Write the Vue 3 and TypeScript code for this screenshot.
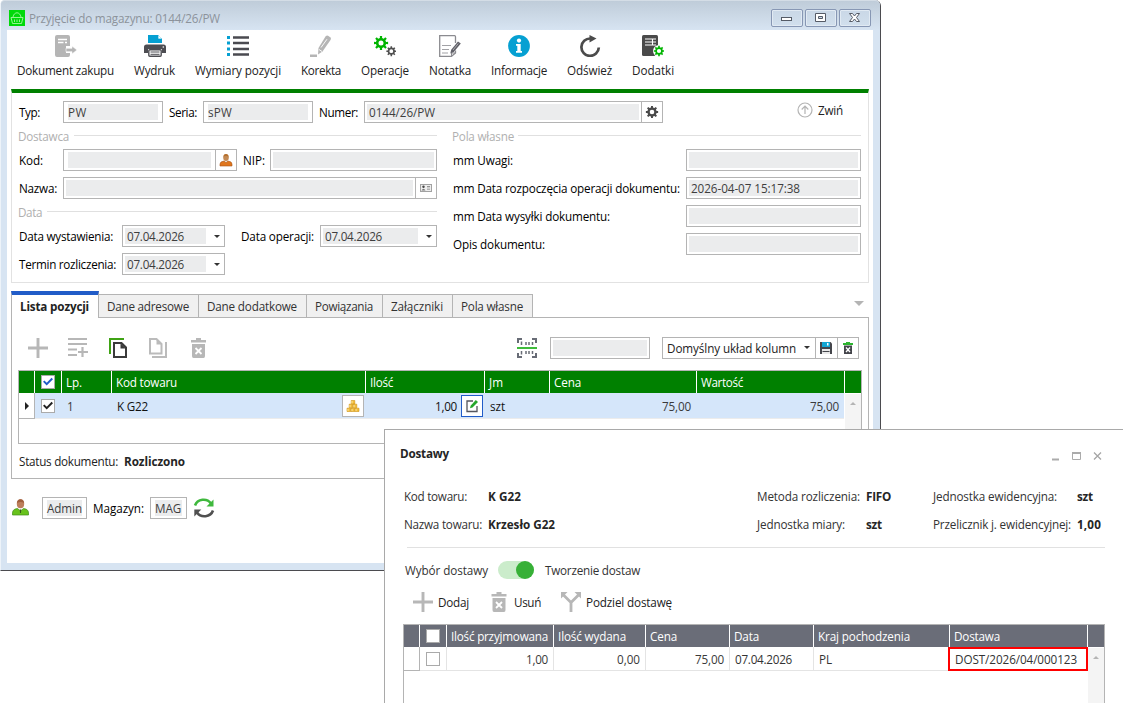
<script setup lang="ts">
import type { Directive } from 'vue'

// Tunes letter spacing so a label occupies the given width in pixels.
const vFit: Directive<HTMLElement, number> = {
  mounted(el, binding) {
    const count = (el.textContent ?? '').trim().length
    if (!count) return
    const natural = el.getBoundingClientRect().width
    el.style.letterSpacing = `${((binding.value - natural) / count).toFixed(3)}px`
  },
}

function gear(cx: number, cy: number, outer: number, inner: number, hole: number, teeth = 8): string {
  const step = (Math.PI * 2) / teeth
  const points: string[] = []
  for (let i = 0; i < teeth; i++) {
    const a = i * step
    const corners: [number, number][] = [
      [inner, a - step * 0.27],
      [outer, a - step * 0.2],
      [outer, a + step * 0.2],
      [inner, a + step * 0.27],
    ]
    for (const [r, t] of corners) {
      points.push(`${(cx + r * Math.sin(t)).toFixed(2)} ${(cy - r * Math.cos(t)).toFixed(2)}`)
    }
  }
  return `M${points.join('L')}ZM${cx - hole} ${cy}a${hole} ${hole} 0 1 0 ${hole * 2} 0a${hole} ${hole} 0 1 0 ${-hole * 2} 0Z`
}

const actions = [
  { id: 'doc', label: 'Dokument zakupu', width: 97 },
  { id: 'print', label: 'Wydruk', width: 41 },
  { id: 'dims', label: 'Wymiary pozycji', width: 86 },
  { id: 'fix', label: 'Korekta', width: 40 },
  { id: 'ops', label: 'Operacje', width: 48 },
  { id: 'note', label: 'Notatka', width: 42 },
  { id: 'info', label: 'Informacje', width: 56 },
  { id: 'reload', label: 'Odśwież', width: 45 },
  { id: 'extra', label: 'Dodatki', width: 42 },
]

const customFields = [
  { label: 'mm Uwagi:', width: 60, value: '' },
  { label: 'mm Data rozpoczęcia operacji dokumentu:', width: 227, value: '2026-04-07 15:17:38' },
  { label: 'mm Data wysyłki dokumentu:', width: 157, value: '' },
  { label: 'Opis dokumentu:', width: 92, value: '' },
]

const tabs = [
  { label: 'Dane adresowe', width: 82 },
  { label: 'Dane dodatkowe', width: 90 },
  { label: 'Powiązania', width: 58 },
  { label: 'Załączniki', width: 52 },
  { label: 'Pola własne', width: 62 },
]

const itemHeads = [
  { label: 'Lp.', width: 16 },
  { label: 'Kod towaru', width: 61 },
  { label: 'Ilość', width: 23 },
  { label: 'Jm', width: 14 },
  { label: 'Cena', width: 27 },
  { label: 'Wartość', width: 42 },
]

const deliveryHeads = [
  { label: 'Ilość przyjmowana', width: 97 },
  { label: 'Ilość wydana', width: 68 },
  { label: 'Cena', width: 27 },
  { label: 'Data', width: 25 },
  { label: 'Kraj pochodzenia', width: 92 },
  { label: 'Dostawa', width: 46 },
]
</script>

<template>
  <div class="screen">
    <section class="window">
      <header class="titlebar">
        <svg class="app-icon" viewBox="0 0 16 16">
          <rect width="16" height="16" fill="#00d90a" />
          <g fill="none" stroke="#a5f7a0" stroke-width="0.9">
            <path d="M2 7.5H14L12.5 13.5H3.5ZM4 7C4.5 4.2 6.3 2.8 8 2.8S11.5 4.2 12 7" />
            <path d="M5.5 9.5V12M8 9.5V12M10.5 9.5V12" />
          </g>
        </svg>
        <span v-fit="191" class="caption">Przyjęcie do magazynu: 0144/26/PW</span>
        <div class="win-buttons">
          <button class="win-button">
            <svg viewBox="0 0 32 18"><rect x="10.5" y="8.500" width="10" height="3" fill="#fff" stroke="#555b66" /></svg>
          </button>
          <button class="win-button">
            <svg viewBox="0 0 32 18"><path d="M10.500 4.500H20.500V12.500H10.500ZM13.500 7.500H17.500V9.500H13.500Z" fill="#fff" fill-rule="evenodd" stroke="#555b66" /></svg>
          </button>
          <button class="win-button">
            <svg viewBox="0 0 32 18"><path d="M10.500 4.500H13.500L15.500 7L17.500 4.500H20.500L17.500 8.500L20.500 12.500H17.500L15.500 10L13.500 12.500H10.500L13.500 8.500Z" fill="#fff" stroke="#555b66" /></svg>
          </button>
        </div>
      </header>

      <div class="client">
        <nav class="actions">
          <div v-for="a in actions" :key="a.id" class="action">
            <svg v-if="a.id === 'doc'" viewBox="0 0 22 22">
              <path d="M2 0H13Q15 0 15 2V11H11V18H15V20Q15 22 13 22H2Q0 22 0 20V2Q0 0 2 0Z" fill="#b5b5b5" />
              <path d="M3 4.500H12M3 7.500H8.500M10 7.500H12" stroke="#fff" stroke-width="1.300" />
              <path d="M11 13.300H17V11L22 15L17 19V16.700H11Z" fill="#b5b5b5" stroke="#fff" stroke-width=".6" />
            </svg>
            <svg v-else-if="a.id === 'print'" viewBox="0 0 22 22">
              <path d="M4 0H14L18 4V8H4Z" fill="#05a0d2" /><path d="M14 0V4H18" fill="#fff" stroke="#05a0d2" stroke-width=".7" />
              <path d="M2.500 9.500H19.500Q22 9.500 22 12V18H18V14H4V18H0V12Q0 9.500 2.500 9.500Z" fill="#4d4d52" />
              <rect x="4.800" y="14.800" width="12.400" height="6.500" rx="1" fill="#fff" stroke="#4d4d52" stroke-width="1.400" />
              <path d="M6.500 17H15.500M6.500 19.300H15.500" stroke="#4d4d52" />
              <circle cx="19.300" cy="12" r=".8" fill="#fff" />
            </svg>
            <svg v-else-if="a.id === 'dims'" viewBox="0 0 22 22">
              <path d="M0 2.500H3M0 8H3M0 14H3M0 19.500H3" stroke="#05a0d2" stroke-width="3" />
              <path d="M6 2.500H22M6 8H22M6 14H22M6 19.500H22" stroke="#4a4a50" stroke-width="2.600" />
            </svg>
            <svg v-else-if="a.id === 'fix'" viewBox="0 0 22 22">
              <path d="M0 19.500H7V22H0Z" fill="#b5b5b5" />
              <path d="M15.500 1.500Q17 0 18.500 1L20.500 2.500Q21.500 3.500 20.500 5L12.500 16.500L8 19.500L8.500 13Z" fill="#b5b5b5" />
              <path d="M11 12.500L17 4.200M9 14.500L12 16.500" stroke="#fff" stroke-width=".9" />
            </svg>
            <svg v-else-if="a.id === 'ops'" viewBox="0 0 22 22">
              <path :d="gear(7, 8, 7.2, 5.2, 2.5)" fill="#00b400" fill-rule="evenodd" />
              <path :d="gear(17.3, 16.200, 5, 3.700, 1.9)" fill="#505050" fill-rule="evenodd" />
            </svg>
            <svg v-else-if="a.id === 'note'" viewBox="0 0 22 22">
              <path d="M16.500 8V2Q16.500 .5 15 .5H.7V21.300H12.500L16.500 18V15.500" fill="none" stroke="#8b8b90" stroke-width="1.300" />
              <path d="M12.500 21.300V18H16.500" fill="none" stroke="#8b8b90" />
              <path d="M3 10.500H12M3 14.500H10M3 18H9" stroke="#a2a2a6" />
              <path d="M19 6.500L21.800 8.500L14.800 17L11.300 18.500L12.200 14.800Z" fill="#606068" />
              <path d="M14 15L19.300 8.500" stroke="#ddd" stroke-width=".6" />
            </svg>
            <svg v-else-if="a.id === 'info'" viewBox="0 0 22 22">
              <circle cx="11" cy="11" r="10.900" fill="#05a0d2" />
              <circle cx="11" cy="5.600" r="2.100" fill="#fff" />
              <path d="M8 9H12.700V16H14V17.800H8V16H9.300V10.700H8Z" fill="#fff" />
            </svg>
            <svg v-else-if="a.id === 'reload'" viewBox="0 0 22 22">
              <path d="M11.500 3.500A8.700 8.700 0 1 0 19.800 12.500" fill="none" stroke="#4b4b4b" stroke-width="2.700" />
              <path d="M10.500 0L17.500 3.500L10.500 7.500Z" fill="#4b4b4b" />
            </svg>
            <svg v-else viewBox="0 0 22 22">
              <path d="M1.500 0H14.500Q16 0 16 1.500V21H1.500Q0 21 0 19.500V1.500Q0 0 1.500 0Z" fill="#4a4a4a" />
              <path d="M3 4H14M3 7H14M3 10H14M10.500 4V10" stroke="#fff" stroke-width="1.100" />
              <circle cx="17" cy="16" r="6" fill="#fff" />
              <path :d="gear(17, 16, 5.2, 3.9, 2.1)" fill="#00b400" fill-rule="evenodd" />
            </svg>
            <span v-fit="a.width">{{ a.label }}</span>
          </div>
        </nav>

        <section class="form">
          <div class="row head-row">
            <label class="l-typ"><span v-fit="21">Typ:</span></label>
            <div class="field f-typ inset"><i><span v-fit="19">PW</span></i></div>
            <label class="l-seria"><span v-fit="28">Seria:</span></label>
            <div class="field f-seria inset"><i><span v-fit="24">sPW</span></i></div>
            <label class="l-numer"><span v-fit="39">Numer:</span></label>
            <div class="field f-numer"><i><span v-fit="66">0144/26/PW</span></i></div>
            <button class="side"><svg class="s14" viewBox="0 0 14 14"><path :d="gear(7, 7, 6.2, 4.7, 2.3)" fill="#4a4a4a" fill-rule="evenodd" /></svg></button>
            <div class="collapse">
              <svg viewBox="0 0 16 16"><circle cx="8" cy="8" r="7" /><path d="M8 12V4.500M4.700 7.500L8 4.200L11.300 7.500" /></svg>
              <span v-fit="25">Zwiń</span>
            </div>
          </div>
          <div class="columns">
            <div class="left">
              <div class="legend"><span v-fit="51">Dostawca</span></div>
              <div class="row">
                <label class="l-typ"><span v-fit="24">Kod:</span></label>
                <div class="field f-kod inset"><i /></div>
                <button class="side">
                  <svg class="s14" viewBox="0 0 14 14">
                    <path d="M1 13V11Q1 8.500 5 8L7 9.500L9 8Q13 8.500 13 11V13Z" fill="#e0761d" stroke="#a8561a" stroke-width=".6" />
                    <ellipse cx="7" cy="4.500" rx="2.800" ry="3.500" fill="#c38a55" /><path d="M4.300 3.500Q4.800 1 7 1T9.700 3.500Q7 2.300 4.300 3.500Z" fill="#b56f2c" />
                  </svg>
                </button>
                <label class="l-nip"><span v-fit="22">NIP:</span></label>
                <div class="field f-nip"><i /></div>
              </div>
              <div class="row">
                <label class="l-typ"><span v-fit="38">Nazwa:</span></label>
                <div class="field f-nazwa"><i /></div>
                <button class="side">
                  <svg class="s14" viewBox="0 0 14 14"><rect x="1.500" y="3.500" width="11" height="7" fill="#eee" stroke="#a2a2a2" /><circle cx="4.500" cy="5.800" r="1.200" fill="#444" /><path d="M2.500 9.500Q4.500 6 6.500 9.500ZM8 5.200H11V6.200H8ZM8 7.700H11V8.500H8Z" fill="#777" /></svg>
                </button>
              </div>
              <div class="legend"><span v-fit="24">Data</span></div>
              <div class="row">
                <label class="l-date"><span v-fit="94">Data wystawienia:</span></label>
                <div class="field date f-wyst"><i><span v-fit="57">07.04.2026</span></i><b class="caret" /></div>
                <label class="l-oper"><span v-fit="73">Data operacji:</span></label>
                <div class="field date f-oper"><i><span v-fit="57">07.04.2026</span></i><b class="caret" /></div>
              </div>
              <div class="row">
                <label class="l-date"><span v-fit="97">Termin rozliczenia:</span></label>
                <div class="field date f-wyst"><i><span v-fit="57">07.04.2026</span></i><b class="caret" /></div>
              </div>
            </div>
            <div class="right">
              <div class="legend"><span v-fit="62">Pola własne</span></div>
              <div v-for="f in customFields" :key="f.label" class="row">
                <label class="l-custom"><span v-fit="f.width">{{ f.label }}</span></label>
                <div class="field f-custom"><i><span v-if="f.value" v-fit="109">{{ f.value }}</span></i></div>
              </div>
            </div>
          </div>
        </section>

        <div class="tabs">
          <div class="tab active"><span v-fit="69">Lista pozycji</span></div>
          <div v-for="t in tabs" :key="t.label" class="tab"><span v-fit="t.width">{{ t.label }}</span></div>
          <b class="tab-more" />
        </div>

        <section class="panel">
          <div class="tools">
            <svg class="tool" viewBox="0 0 22 22"><path d="M11 1V21M1 11H21" stroke="#b7b7b7" stroke-width="2.900" /></svg>
            <svg class="tool" viewBox="0 0 22 22"><path d="M1 2H20M1 7H20M1 12.500H10M1 18H10M15.500 10V20M11 15H21" stroke="#b7b7b7" stroke-width="2.200" /></svg>
            <svg class="tool" viewBox="0 0 22 22"><path d="M3 17V2H17" fill="none" stroke="#3fa314" stroke-width="2" /><path d="M7 6H14.500L19 10.500V20H7Z" fill="#fff" stroke="#3b3b3b" stroke-width="2" /><path d="M13.500 6V11.500H19Z" fill="#3b3b3b" /></svg>
            <svg class="tool" viewBox="0 0 22 22"><path d="M3 2H9.500L14.500 7V16.500H3Z" fill="none" stroke="#bbb" stroke-width="2" /><path d="M9.500 2V7.500H14.500Z" fill="#bbb" /><path d="M19 5V20H5" fill="none" stroke="#bbb" stroke-width="2" /></svg>
            <svg class="tool" viewBox="0 0 22 22"><path d="M4 3H9V1H14V3H19V5.500H4ZM5 7H18V19Q18 21 16.500 21H6.500Q5 21 5 19Z" fill="#b7b7b7" /><path d="M8.500 11L14.500 17M14.500 11L8.500 17" stroke="#fff" stroke-width="1.800" /></svg>
            <svg class="scan" viewBox="0 0 22 22">
              <path d="M2 6V2H6M16 2H20V6M2 16V20H6M16 20H20V16" fill="none" stroke="#686c76" stroke-width="2" />
              <path d="M5.500 4.500V8M10 5V8M13 5V8M16.500 5V8M5.500 14V17.500M10 14V17M13 14V17M16.500 14V17" stroke="#686c76" stroke-width="1.500" />
              <path d="M1 11H21" stroke="#3fbb3c" stroke-width="2" />
            </svg>
            <div class="field f-scan"><i /></div>
            <div class="combo"><span v-fit="129">Domyślny układ kolumn</span><b class="caret" /></div>
            <button class="side save">
              <svg class="s14" viewBox="0 0 14 14"><path d="M1 1H11.500L13 2.500V13H1Z" fill="#45464c" /><path d="M3 1H11V6H3Z" fill="#12a6d4" /><path d="M8 2H9.500V4.500H8Z" fill="#fff" /><path d="M3 8H11V13H3Z" fill="#e8e8e8" /><path d="M3.500 10.500H10.500" stroke="#45464c" /></svg>
            </button>
            <button class="side">
              <svg class="s14" viewBox="0 0 14 14"><path d="M2 2H5V1H9V2H12V4H2Z" fill="#2db430" /><path d="M3 4.500H11V13H3Z" fill="#44454b" /><path d="M5 6.500L9 11M9 6.500L5 11" stroke="#fff" stroke-width="1.300" /></svg>
            </button>
          </div>

          <div class="items">
            <div class="grid-row ihead">
              <div class="cell" />
              <div class="cell check"><svg class="box" viewBox="0 0 14 14"><path d="M2 6L5.500 9.500L12 3" stroke="#215cc8" /></svg></div>
              <div v-for="h in itemHeads" :key="h.label" class="cell"><span v-fit="h.width">{{ h.label }}</span></div>
              <div class="cell" />
            </div>
            <div class="grid-row irow">
              <div class="marker"><b /></div>
              <div class="cell check"><svg class="box" viewBox="0 0 14 14"><path d="M2 6L5.500 9.500L12 3" stroke="#222" /></svg></div>
              <div class="cell dim">1</div>
              <div class="cell split">
                <span v-fit="31">K G22</span>
                <button class="side gold">
                  <svg class="s14" viewBox="0 0 14 14"><g fill="#f3bd38" stroke="#cf9418" stroke-width=".6"><path d="M5.200 1.500H8.800V5H5.200ZM3.200 5.200H6.800V8.800H3.200ZM7.200 5.200H10.800V8.800H7.200ZM1 9.200H4.800V12.500H1ZM5.100 9.200H8.900V12.500H5.100ZM9.200 9.200H13V12.500H9.200Z" /></g><path d="M6 2V4.500M4 6V8.300M8 6V8.300M2 10V12M6 10V12M10 10V12" stroke="#fff3bd" stroke-width=".8" /></svg>
                </button>
              </div>
              <div class="cell qty">
                <span v-fit="22">1,00</span>
                <button class="side edit">
                  <svg class="s14" viewBox="0 0 14 14"><path d="M8 2H2V12.500H12V7" fill="none" stroke="#55565d" stroke-width="1.300" /><path d="M10.800 1L13 3L7.500 8.500L5 9.300L5.600 6.800Z" fill="#25a72c" /></svg>
                </button>
              </div>
              <div class="cell"><span v-fit="15">szt</span></div>
              <div class="cell num"><span v-fit="29">75,00</span></div>
              <div class="cell num"><span v-fit="29">75,00</span></div>
            </div>
            <div class="scrollbar"><b /></div>
          </div>
          <div class="status"><span v-fit="99">Status dokumentu:</span><strong v-fit="61">Rozliczono</strong></div>
        </section>

        <footer class="footer">
          <svg class="user" viewBox="0 0 16 17">
            <path d="M0 16V14Q0 10 5 9.500L8 12L11 9.500Q16 10 16 14V16Z" fill="#68c21c" stroke="#3f8d18" stroke-width=".7" />
            <ellipse cx="8" cy="4.800" rx="3.700" ry="4.500" fill="#bd7f5c" /><path d="M4.400 4Q5 .3 8 .3T11.600 4Q8 1.800 4.400 4Z" fill="#a05f3d" /><path d="M7.300 10.500H8.700L8.500 14H7.500Z" fill="#37591a" />
          </svg>
          <div class="field f-admin inset"><i><span v-fit="35">Admin</span></i></div>
          <label class="l-mag"><span v-fit="51">Magazyn:</span></label>
          <div class="field f-mag inset"><i><span v-fit="26">MAG</span></i></div>
          <svg class="sync" viewBox="0 0 22 22">
            <path d="M2 8.500A9 8.500 0 0 1 18 6.500" fill="none" stroke="#3fb83d" stroke-width="2.600" /><path d="M20.500 2.500V9.500H13.500Z" fill="#3fb83d" />
            <path d="M20 13.500A9 8.500 0 0 1 4 15.500" fill="none" stroke="#505050" stroke-width="2.600" /><path d="M1.300 19.500V12.500H8.300Z" fill="#505050" />
          </svg>
        </footer>
      </div>
    </section>

    <section class="dialog">
      <header class="dialog-head">
        <strong v-fit="49">Dostawy</strong>
        <svg class="dialog-controls" viewBox="0 0 50 12"><path d="M0 9.500H7" stroke="#ababab" stroke-width="2" /><path d="M20.500 2.500H28.500V9.500H20.500Z" fill="none" stroke="#ababab" /><path d="M20 3H29" stroke="#ababab" stroke-width="2" /><path d="M42 2.500L49 9.500M49 2.500L42 9.500" stroke="#a5a5a5" stroke-width="1.300" /></svg>
      </header>
      <div class="facts">
        <span v-fit="63">Kod towaru:</span><strong><span v-fit="33">K G22</span></strong>
        <span v-fit="103">Metoda rozliczenia:</span><strong><span v-fit="25">FIFO</span></strong>
        <span v-fit="124">Jednostka ewidencyjna:</span><strong><span v-fit="16">szt</span></strong>
        <span v-fit="78">Nazwa towaru:</span><strong><span v-fit="67">Krzesło G22</span></strong>
        <span v-fit="88">Jednostka miary:</span><strong><span v-fit="16">szt</span></strong>
        <span v-fit="138">Przelicznik j. ewidencyjnej:</span><strong><span v-fit="24">1,00</span></strong>
      </div>
      <div class="mode">
        <span v-fit="83">Wybór dostawy</span>
        <div class="switch"><b /></div>
        <span v-fit="95">Tworzenie dostaw</span>
      </div>
      <div class="dialog-tools">
        <svg class="tool" viewBox="0 0 22 22"><path d="M11 1V21M1 11H21" stroke="#b7b7b7" stroke-width="2.900" /></svg>
        <span v-fit="31" class="t1">Dodaj</span>
        <svg class="tool" viewBox="0 0 22 22"><path d="M3.500 3H8.500V1H13.500V3H18.500V5.500H3.500ZM4.500 7H17.500V19Q17.500 21 16 21H6Q4.500 21 4.500 19Z" fill="#b7b7b7" /><path d="M8 11L14 17M14 11L8 17" stroke="#fff" stroke-width="1.800" /></svg>
        <span v-fit="27" class="t2">Usuń</span>
        <svg class="tool" viewBox="0 0 22 22"><path d="M11 21V11.500L3.500 4M11 11.500L18.500 4" fill="none" stroke="#b7b7b7" stroke-width="2.800" /><path d="M1 1H7.500L1 7.500ZM21 1H14.500L21 7.500Z" fill="#b7b7b7" /></svg>
        <span v-fit="86">Podziel dostawę</span>
      </div>
      <div class="deliveries">
        <div class="grid-row dhead">
          <div class="cell" />
          <div class="cell check"><svg class="box" viewBox="0 0 14 14" /></div>
          <div v-for="h in deliveryHeads" :key="h.label" class="cell"><span v-fit="h.width">{{ h.label }}</span></div>
          <div class="cell" />
        </div>
        <div class="grid-row drow">
          <div class="marker" />
          <div class="cell check"><svg class="box" viewBox="0 0 14 14" /></div>
          <div class="cell num"><span v-fit="22">1,00</span></div>
          <div class="cell num"><span v-fit="23">0,00</span></div>
          <div class="cell num"><span v-fit="29">75,00</span></div>
          <div class="cell"><span v-fit="57">07.04.2026</span></div>
          <div class="cell"><span v-fit="13">PL</span></div>
          <div class="cell marked"><span v-fit="122">DOST/2026/04/000123</span></div>
        </div>
        <div class="scrollbar"><b /></div>
      </div>
    </section>
  </div>
</template>

<style>
html, body { margin: 0; background: #fff; }
</style>

<style scoped>
* { box-sizing: border-box; }
.screen { position: relative; width: 1123px; height: 703px; overflow: hidden; background: #fff; font: 11.7px/16px "Open Sans", "Noto Sans", sans-serif; color: #111; }
span, strong { display: inline-block; white-space: nowrap; }
strong { font-weight: 700; color: #252525; }
svg { display: block; flex: none; fill: none; }
button { padding: 0; background: #fff; font: inherit; }

.window { width: 881px; height: 571px; padding: 0 7px 7px 6px; background: #d7e4f2; border: solid #4b4b4f; border-width: 0 1px 1px 0; border-left: 1px solid #edf3f9; border-radius: 5px 6px 0 0; box-shadow: inset 0 1px #d6e0ea; }
.titlebar { display: flex; height: 30px; margin: 0 -7px 0 -6px; padding: 9px 9px 0 8px; background: linear-gradient(#bfccd9, #d7e4f2); border-top: 1px solid #d4dde6; border-radius: 4px 5px 0 0; }
.app-icon { width: 16px; height: 16px; }
.caption { height: 16px; margin-left: 4px; color: #8c939b; line-height: 17px; }
.win-buttons { display: flex; gap: 2px; height: 18px; margin: -1px 0 0 auto; }
.win-button { width: 32px; height: 18px; background: linear-gradient(#c9d7e6, #d1dfed); border: 1px solid #8797b4; border-radius: 2px; box-shadow: inset 0 0 0 1px #e1eaf3; }
.win-button svg { width: 32px; height: 18px; margin: -1px; }
.client { height: 533px; padding: 5px 4px 0; background: #fff; }

.actions { display: flex; gap: 20px; height: 54px; padding-left: 6px; color: #222; }
.action { display: flex; flex-direction: column; align-items: center; gap: 5px; }
.action svg { width: 22px; height: 22px; }

.form { height: 194px; padding: 8px 7px 0 7px; border: 1px solid #e2e2e2; border-top: 4px solid #008000; }
.row { display: flex; height: 22px; margin-bottom: 6px; }
.row label, .footer label { flex: none; line-height: 23px; color: #000; }
.l-typ { width: 44px; }
.l-seria { width: 40px; padding-left: 6px; }
.l-numer { width: 51px; padding-left: 6px; }
.l-nip { width: 33px; padding-left: 6px; }
.l-date { width: 103px; }
.l-oper { width: 95px; padding-left: 16px; }
.l-custom { width: 234px; padding-left: 1px; }
.field { display: flex; flex: none; height: 22px; padding: 2px; background: #fff; border: 1px solid #b4b4b4; }
.field i { display: block; flex: 1; height: 16px; padding-left: 2px; background: #ebeced; color: #3e3e3e; font-style: normal; line-height: 17px; }
.field.inset { padding: 2px 4px; }
.field.inset i { padding-left: 0; }
.f-typ { width: 100px; }
.f-seria { width: 110px; }
.f-numer { width: 278px; }
.f-kod { width: 153px; }
.f-nip { width: 167px; }
.f-nazwa { width: 353px; }
.f-wyst { width: 103px; }
.f-oper { width: 117px; }
.f-custom { width: 175px; }
.field.date { padding-right: 4px; align-items: center; }
.caret { border: solid transparent; border-width: 3px 3px 0; border-top-color: #333; }
.date .caret { width: 6px; margin-left: 8px; }
.side { display: flex; flex: none; align-items: center; justify-content: center; width: 22px; height: 22px; border: 1px solid #b4b4b4; }
.field + .side { margin-left: -1px; }
.collapse { display: flex; gap: 5px; margin: 1px 0 0 134px; color: #222; }
.s14 { width: 14px; height: 14px; }
.collapse svg { width: 16px; height: 16px; stroke: #b4b4b4; stroke-width: 1.2; }
.collapse span { line-height: 17px; }
.columns { display: flex; gap: 15px; padding-top: 4px; }
.left { width: 418px; }
.right { width: 409px; }
.columns .legend { display: flex; align-items: center; gap: 5px; height: 12px; margin: -3px 0 7px -1px; color: #b0b0b0; }
.columns .right .legend { margin-left: 0; gap: 4px; }
.columns .legend::after { content: ""; flex: 1; height: 1px; margin-top: -2px; background: #e0e0e0; }
.columns .row + .legend { margin-top: 7px; }

.tabs { display: flex; align-items: flex-end; height: 27px; margin-top: 7px; color: #333; }
.tab { height: 23px; margin-right: -1px; padding: 0 9px 0 8px; background: #f0f0f0; border: 1px solid #b4b4b4; border-width: 1px 1px 0; line-height: 23px; }
.tab.active { position: relative; height: 27px; margin-bottom: -1px; padding: 0 9px 0 8px; background: #fff; border-top: 4px solid #215cc8; border-left-color: #b4b4b4; color: #222; font-weight: 700; line-height: 23px; }
.tab-more { margin: 0 5px 11px auto; border: solid transparent; border-width: 5px 5px 0; border-top-color: #b4b4b4; }
.panel { height: 162px; padding: 19px 6px 0; border: 1px solid #b4b4b4; }
.tools { display: flex; height: 33px; padding-left: 9px; }
.tool { width: 22px; height: 22px; margin-right: 18px; }
.scan { width: 22px; height: 22px; margin: 0 12px 0 289px; }
.f-scan { width: 100px; }
.combo { display: flex; align-items: center; justify-content: space-between; width: 154px; height: 22px; margin-left: 12px; padding: 0 5px 1px 4px; border: 1px solid #b4b4b4; color: #222; }
.combo ~ .side { margin-left: -1px; }
.combo ~ .save { width: 23px; padding-right: 1px; }

.items { position: relative; width: 844px; height: 74px; border: 1px solid #b4b4b4; overflow: hidden; }
.grid-row { display: grid; }
.ihead, .irow { grid-template-columns: 15px 27px 50px 254px 119px 65px 147px 148px 17px; }
.cell { display: flex; align-items: center; min-width: 0; padding-left: 5px; }
.ihead .cell { padding-left: 4px; }
.ihead .cell.check, .dhead .cell.check { padding-left: 6px; }
.box { width: 14px; height: 14px; border: 1px solid #aaa; background: #fff; stroke-width: 2.3; }
.ihead { height: 22px; background: #008000; color: #fff; }
.ihead .cell + .cell, .dhead .cell + .cell { border-left: 1px solid #fff; }
.irow { width: 825px; height: 26px; background: #d5e6fa; border-bottom: 1px solid #ececec; grid-template-columns: 15px 27px 50px 254px 119px 65px 147px 148px; }
.irow .cell.check { padding-left: 7px; }
.dim, .num { color: #3a3a3a; }
.irow .dim { padding-left: 6px; }
.num { justify-content: flex-end; padding-right: 5px; }
.split { justify-content: space-between; padding: 0 1px 0 6px; }
.qty { justify-content: flex-end; gap: 4px; padding-right: 1px; }
.irow .cell:nth-child(6) { padding-left: 6px; }
.edit { border-color: #215cc8; }
.marker { display: flex; align-items: center; justify-content: center; width: 16px; background: #fff; border: solid #b4b4b4; border-width: 0 1px 1px 0; }
.marker b { border: solid transparent; border-width: 4px 0 4px 4px; border-left-color: #222; }
.irow .marker { height: 26px; }
.scrollbar { position: absolute; top: 23px; right: 0; bottom: 0; width: 16px; background: #f4f4f4; }
.scrollbar b { display: block; margin: 8px 0 0 5px; width: 0; border: solid transparent; border-width: 0 3px 3px; border-bottom-color: #b4b4b4; }
.status { display: flex; gap: 6px; padding: 9px 0 0 1px; color: #222; }

.footer { display: flex; height: 22px; margin-top: 18px; }
.user { width: 17px; height: 17px; margin: 2px 13px 0 1px; }
.f-admin { width: 45px; }
.l-mag { width: 63px; padding-left: 6px; }
.f-mag { width: 37px; }
.sync { width: 22px; height: 22px; margin-left: 6px; }

.dialog { position: absolute; left: 384px; top: 429px; width: 745px; height: 280px; background: #fff; border: 1px solid #a9a9a9; color: #333; }
.dialog-head { display: flex; justify-content: space-between; height: 54px; padding: 15px 26px 0 15px; }
.dialog-controls { width: 50px; height: 12px; margin-top: 5px; }
.facts { display: grid; grid-template-columns: 84px 269px 109px 67px 144px 40px; grid-auto-rows: 28px; justify-items: start; width: 698px; height: 64px; margin-left: 22px; border-bottom: 1px solid #e1e1e1; line-height: 24px; }
.facts > * { margin-left: -3px; }
.mode { display: flex; align-items: center; height: 18px; margin: 13px 0 0 20px; }
.switch { display: flex; justify-content: flex-end; width: 36px; height: 18px; margin: 0 11px 0 10px; background: #cbeccb; border-radius: 9px; }
.switch b { width: 18px; height: 18px; background: #37b037; border-radius: 50%; }
.dialog-tools { display: flex; align-items: center; height: 22px; margin: 12px 0 0 27px; color: #222; }
.dialog-tools .tool { margin-right: 4px; }
.t1 { margin-right: 19px; }
.t2 { margin-right: 19px; }
.deliveries { position: relative; width: 702px; height: 120px; margin: 11px 0 0 18px; border: 1px solid #b4b4b4; }
.dhead { grid-template-columns: 15px 27px 107px 92px 84px 84px 136px 138px 17px; height: 22px; background: #6a6d78; color: #fff; }
.dhead .cell, .drow .cell { padding-left: 4px; }
.drow { grid-template-columns: 15px 27px 107px 92px 84px 84px 136px 138px; width: 683px; height: 24px; border-bottom: 1px solid #e4e4e4; }
.drow .cell + .cell { border-left: 1px solid #e4e4e4; padding-left: 5px; }
.drow .cell.check { padding-left: 7px; }
.drow .marker { height: 24px; }
.drow .num { padding-right: 5px; }
.drow .cell.marked { width: 140px; height: 24px; margin-left: -1px; border: 2px solid #f00; z-index: 1; }
</style>
